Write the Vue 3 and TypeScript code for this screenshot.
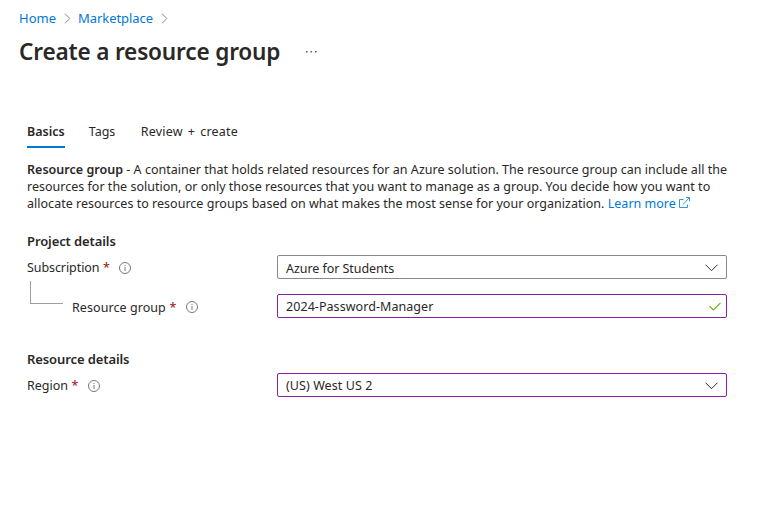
<script setup lang="ts">
import { ref } from 'vue'

const tabs = ['Basics', 'Tags', 'Review + create']
const activeTab = ref('Basics')
const crumbs = ['Home', 'Marketplace']
</script>

<template>
  <main class="page">
    <nav class="breadcrumb">
      <template v-for="crumb in crumbs" :key="crumb">
        <a class="crumb" :class="crumb.toLowerCase()">{{ crumb }}</a>
        <svg class="separator" width="7" height="11" viewBox="0 0 7 11"><path d="M1 .7 5.8 5.5 1 10.3" /></svg>
      </template>
    </nav>
    <header class="heading">
      <h1>Create a resource group</h1>
      <svg class="more" width="13" height="3" viewBox="0 0 13 3"><path d="M1 1h1.6v1.6H1zM5.5 1h1.6v1.6H5.5zM10 1h1.6v1.6H10z" /></svg>
    </header>

    <div class="tabs">
      <button v-for="(tab, i) in tabs" :key="tab" type="button" :class="['tab', 'tab-' + i, { active: tab === activeTab }]" @click="activeTab = tab">{{ tab }}</button>
    </div>

    <p class="description">
      <span class="line l1"><span class="term">Resource group</span> - A container that holds related resources for an Azure solution. The resource group can include all the</span>
      <span class="line l2">resources for the solution, or only those resources that you want to manage as a group. You decide how you want to</span>
      <span class="line l3">allocate resources to resource groups based on what makes the most sense for your organization. <a class="learn">Learn more<svg class="external" width="11" height="12" viewBox="0 0 11 12"><path d="M4.5 2.5H.5v8h8V7.5M4 7.5l6.5-7M7 .5h3.5v3.7" /></svg></a></span>
    </p>

    <section class="project">
      <h2 class="h-project">Project details</h2>
      <div class="row">
        <label class="label"><span class="t-sub">Subscription</span><span class="required">*</span>
          <svg class="info" width="12" height="12" viewBox="0 0 12 12"><circle cx="6" cy="6" r="5.5" /><path d="M6 5v4M6 3v1" /></svg>
        </label>
        <div class="field"><span class="v-sub">Azure for Students</span>
          <svg class="chevron" width="13" height="8" viewBox="0 0 13 8"><path d="m.5 .7 6 6 6-6" /></svg>
        </div>
      </div>
      <div class="row nested">
        <i class="branch"></i>
        <label class="label"><span class="t-group">Resource group</span><span class="required">*</span>
          <svg class="info" width="12" height="12" viewBox="0 0 12 12"><circle cx="6" cy="6" r="5.5" /><path d="M6 5v4M6 3v1" /></svg>
        </label>
        <div class="field edited"><span class="v-group">2024-Password-Manager</span>
          <svg class="check" width="12" height="9" viewBox="0 0 12 9"><path d="m.5 4.2 3.8 3.8 7.2-7.2" /></svg>
        </div>
      </div>
    </section>

    <section class="resource">
      <h2 class="h-resource">Resource details</h2>
      <div class="row">
        <label class="label"><span class="t-region">Region</span><span class="required">*</span>
          <svg class="info" width="12" height="12" viewBox="0 0 12 12"><circle cx="6" cy="6" r="5.5" /><path d="M6 5v4M6 3v1" /></svg>
        </label>
        <div class="field edited"><span class="v-region">(US) West US 2</span>
          <svg class="chevron" width="13" height="8" viewBox="0 0 13 8"><path d="m.5 .7 6 6 6-6" /></svg>
        </div>
      </div>
    </section>
  </main>
</template>

<style>
body { background: #fff; }
</style>

<style scoped>
.page {
  box-sizing: border-box;
  width: 784px;
  height: 509px;
  padding: 9px 19px 0;
  overflow: hidden;
  background: #fff;
  color: #292827;
  font: 12.5px/17px 'Noto Sans', 'Open Sans', sans-serif;
}
svg { fill: none; stroke: currentColor; flex: none; }
a { color: #0078d4; }
.breadcrumb { display: flex; align-items: center; height: 18px; font-size: 13px; }
.marketplace { letter-spacing: -.06px; }
.separator { color: #8a8886; margin: 1px 7px 0 8px; }
.heading { display: flex; align-items: center; height: 32px; margin-top: 8px; }
h1 { margin: 0; padding-top: 2px; font-size: 22.6px; font-weight: 600; line-height: 32px; letter-spacing: -.18px; white-space: nowrap; }
.more { margin-left: 25px; fill: #605e5c; stroke: none; }
.tabs { display: flex; gap: 24px; margin: 53px 0 0 8px; height: 28px; }
.tab { padding: 3px 0 0; border: 0; border-bottom: 2px solid transparent; background: none; color: inherit; font: inherit; line-height: 17px; text-align: left; white-space: nowrap; display: flex; }
.tab.active { font-weight: 600; border-color: #0078d4; }
.tab-2 { margin-left: 1.5px; letter-spacing: .2px; word-spacing: 1.6px; }
.description { margin: 13px 0 0 8px; }
.line { display: block; height: 17px; white-space: nowrap; }
.l1 { letter-spacing: .02px; }
.l2 { letter-spacing: .01px; }
.l3 { letter-spacing: .02px; }
.term { font-weight: 600; }
.external { margin-left: 3px; vertical-align: -1px; color: #3494dc; }
section { margin-left: 8px; }
.project { margin-top: 21px; }
.resource { margin-top: 33px; }
h2 { margin: 0; height: 17px; font-size: 13px; line-height: 17px; font-weight: 600; letter-spacing: -.1px; }
.row { display: flex; align-items: center; height: 24px; margin-top: 5px; }
.label { display: flex; align-items: center; width: 250px; white-space: nowrap; }
.t-sub { letter-spacing: -.08px; }
.t-group { letter-spacing: .07px; }
.required { margin-left: 3.5px; color: #a4262c; font-size: 12.5px; font-weight: 500; }
.info { margin: 1px 0 0 9.5px; color: #797775; }
.nested { margin-top: 15px; }
.nested .label { width: 205px; padding-top: 2px; }
.nested .info { margin-top: -1px; }
.branch { box-sizing: border-box; width: 33px; height: 23px; margin: -29px 9px 0 3px; border: solid #a19f9d; border-width: 0 0 1px 1px; position: relative; top: 1px; }
.field { box-sizing: border-box; display: flex; justify-content: space-between; align-items: center; width: 450px; height: 24px; padding: 1px 8px 0; border: 1px solid #8a8886; border-radius: 2px; white-space: nowrap; }
.edited { border-color: #881fa8; }
.v-sub { letter-spacing: -.06px; padding-top: 1px; }
.v-group { letter-spacing: .06px; }
.v-region { letter-spacing: .08px; }
.chevron { color: #323130; }
.check { color: #6bb700; margin-right: -3px; stroke-width: 1.2; }
</style>
